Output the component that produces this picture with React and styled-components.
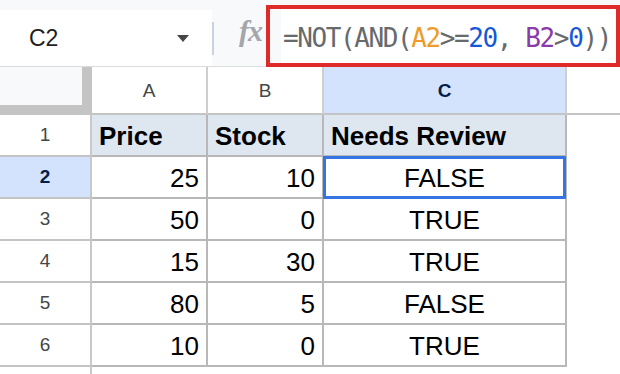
import React from "react";
import styled, { createGlobalStyle } from "styled-components";

const GlobalStyle = createGlobalStyle`
  html, body {
    margin: 0;
    padding: 0;
    background: #fff;
  }
  body {
    font-family: "Liberation Sans", Arial, sans-serif;
    overflow: hidden;
  }
`;

const Page = styled.div`
  width: 620px;
  height: 374px;
  overflow: hidden;
  background: #fff;
`;

const Toolbar = styled.div`
  display: flex;
  height: 67px;
  box-sizing: border-box;
  background: #f8f9fa;
  border-bottom: 1px solid #dadce0;
`;

const NameBox = styled.div`
  width: 212px;
  margin-top: 10px;
  box-sizing: border-box;
  display: flex;
  align-items: center;
  justify-content: space-between;
  padding: 0 23px 0 29px;
  background: #fff;
  font-size: 23px;
  color: #1f1f1f;
`;

const Caret = styled.span`
  width: 0;
  height: 0;
  margin-top: 1px;
  border-left: 6.5px solid transparent;
  border-right: 6.5px solid transparent;
  border-top: 7px solid #444746;
`;

const Divider = styled.div`
  width: 2px;
  height: 33px;
  margin-top: 22px;
  background: #c9d3df;
`;

const FxArea = styled.div`
  width: 52px;
  box-sizing: border-box;
  padding: 16px 0 0 25px;
  font-family: "Liberation Serif", "Times New Roman", serif;
  font-style: italic;
  font-weight: bold;
  font-size: 30px;
  line-height: 29px;
  color: #a3a6aa;
  letter-spacing: -1px;
`;

const FormulaBox = styled.div`
  flex: 1;
  display: flex;
  margin: 5px 0 -1px 0;
  border: 4.5px solid #df2a2a;
  background: #f8f9fa;
`;

const FormulaInput = styled.div`
  flex: 1;
  display: flex;
  align-items: center;
  margin-left: 11px;
  padding: 3px 0 0 2px;
  background: #fff;
  font-family: "DejaVu Sans Mono", "Liberation Mono", monospace;
  font-size: 26px;
  letter-spacing: -1.4px;
  white-space: pre;
  color: #666a6d;
`;

const Token = styled.span`
  color: ${p => p.$color || "inherit"};
`;

const Grid = styled.div`
  display: grid;
  grid-template-columns: 92px 116px 116px 243px 1fr;
  grid-template-rows: 48px repeat(7, 42px);
`;

const Corner = styled.div`
  background: #f8f9fa;
  border-right: 10px solid #c4c4c4;
  border-bottom: 10px solid #c4c4c4;
`;

const ColHead = styled.div`
  display: flex;
  align-items: center;
  justify-content: center;
  border-right: ${p => (p.$blank ? "none" : "2px solid #cfcfcf")};
  border-bottom: 2px solid #c4c4c4;
  background: ${p => (p.$active ? "#d3e3fd" : "#fff")};
  color: ${p => (p.$active ? "#041e49" : "#444746")};
  font-weight: ${p => (p.$active ? "bold" : "normal")};
  font-size: 19px;
  padding-top: 1px;
`;

const RowHead = styled.div`
  display: flex;
  align-items: center;
  justify-content: center;
  border-right: 2px solid #c8c8c8;
  border-bottom: ${p => (p.$last ? "none" : "2px solid #c4c4c4")};
  background: ${p => (p.$active ? "#d3e3fd" : "#fff")};
  color: ${p => (p.$active ? "#041e49" : "#444746")};
  font-weight: ${p => (p.$active ? "bold" : "normal")};
  font-size: 19px;
`;

const Cell = styled.div`
  position: relative;
  display: flex;
  align-items: center;
  justify-content: ${p =>
    p.$align === "right" ? "flex-end" : p.$align === "center" ? "center" : "flex-start"};
  padding: 3px 7px 0 7px;
  border-right: 2px solid #b8b8b8;
  border-bottom: 2px solid #b8b8b8;
  background: ${p => (p.$title ? "#dee6ef" : "#fff")};
  font-size: 26px;
  font-weight: ${p => (p.$title ? "bold" : "normal")};
  color: #000;

  &::after {
    content: "";
    display: ${p => (p.$selected ? "block" : "none")};
    position: absolute;
    top: -1px;
    left: -1px;
    right: -1px;
    bottom: -2px;
    border: 3px solid #3574e3;
    pointer-events: none;
  }
`;

const Blank = styled.div`
  background: #fff;
`;

const formula = [
  ["=NOT(AND("],
  ["A2", "#ee9b2b"],
  [">="],
  ["20", "#1558d6"],
  [", "],
  ["B2", "#8a3ba8"],
  [">"],
  ["0", "#1558d6"],
  ["))"],
];

const data = [
  ["25", "10", "FALSE"],
  ["50", "0", "TRUE"],
  ["15", "30", "TRUE"],
  ["80", "5", "FALSE"],
  ["10", "0", "TRUE"],
];

const App = () => {
  return (
    <Page>
      <GlobalStyle />
      <Toolbar>
        <NameBox>
          <span>C2</span>
          <Caret />
        </NameBox>
        <Divider />
        <FxArea>fx</FxArea>
        <FormulaBox>
          <FormulaInput>
            {formula.map(([text, color], i) => (
              <Token key={i} $color={color}>
                {text}
              </Token>
            ))}
          </FormulaInput>
        </FormulaBox>
      </Toolbar>

      <Grid>
        <Corner />
        <ColHead>A</ColHead>
        <ColHead>B</ColHead>
        <ColHead $active>C</ColHead>
        <ColHead $blank />

        <RowHead>1</RowHead>
        <Cell $title>Price</Cell>
        <Cell $title>Stock</Cell>
        <Cell $title>Needs Review</Cell>
        <Blank />

        {data.map((row, i) => (
          <React.Fragment key={i}>
            <RowHead $active={i === 0}>{i + 2}</RowHead>
            <Cell $align="right">{row[0]}</Cell>
            <Cell $align="right">{row[1]}</Cell>
            <Cell $align="center" $selected={i === 0}>
              {row[2]}
            </Cell>
            <Blank />
          </React.Fragment>
        ))}

        <RowHead $last />
        <Blank />
        <Blank />
        <Blank />
        <Blank />
      </Grid>
    </Page>
  );
};

export default App;
